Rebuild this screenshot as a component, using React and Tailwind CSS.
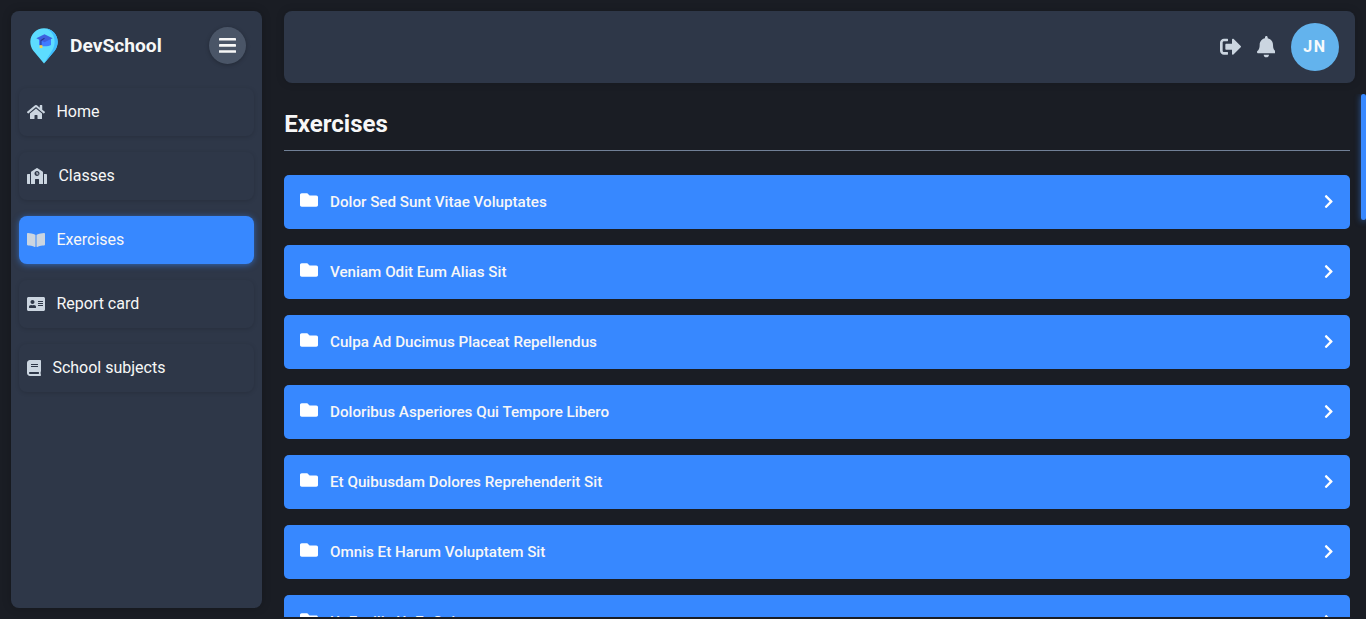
import React from "react";
import {
  FaHome, FaSchool, FaBookOpen, FaAddressCard, FaBook, FaSignOutAlt,
  FaBell, FaFolder, FaChevronRight,
} from "react-icons/fa";

const nav = [
  { label: "Home", Icon: FaHome, size: "w-[18px]" },
  { label: "Classes", Icon: FaSchool, size: "w-[20px]" },
  { label: "Exercises", Icon: FaBookOpen, size: "w-[18px]", active: true },
  { label: "Report card", Icon: FaAddressCard, size: "w-[18px]" },
  { label: "School subjects", Icon: FaBook, size: "w-[14px]" },
];

const folders = [
  "Dolor Sed Sunt Vitae Voluptates",
  "Veniam Odit Eum Alias Sit",
  "Culpa Ad Ducimus Placeat Repellendus",
  "Doloribus Asperiores Qui Tempore Libero",
  "Et Quibusdam Dolores Reprehenderit Sit",
  "Omnis Et Harum Voluptatem Sit",
  "Ut Facilis Ut Et Qui",
];

function Logo() {
  return (
    <svg viewBox="0 0 28 36" className="h-9 w-7 shrink-0">
      <path d="M14 .3C6.400.3.300 6.300.300 13.700c0 3.100 1 6 2.800 8.700L14 35.400l10.900-13c1.800-2.700 2.800-5.600 2.800-8.700C27.700 6.300 21.600.3 14 .3z" fill="#5ddcff" />
      <path d="M16 .5c5 1.700 8.600 7 8.600 13.200 0 3.100-.8 6-2.500 8.700L14 35.400l10.900-13c1.800-2.700 2.800-5.600 2.800-8.700C27.700 7 22.600 1.200 16 .5z" fill="#3fbcff" />
      <path d="M9 11v6c2.500 1.700 9.500 1.700 12 0V11z" fill="#3f7cff" />
      <path d="M14.500 6.300 22.600 10.300 14.500 14.300 6.300 10.300z" fill="#3d60e0" />
      <path d="M14.500 10.300 10.900 12.600v5" fill="none" stroke="#26358f" strokeWidth="1.100" />
      <path d="M9.600 17.200h2.800v2.900H9.600z" fill="#f4d14e" />
    </svg>
  );
}

function MenuIcon() {
  return (
    <svg viewBox="0 0 17 15" className="h-[15px] w-[17px]" fill="currentColor">
      <rect width="17" height="2.6" rx="0.4" />
      <rect y="6.100" width="17" height="2.600" rx="0.4" />
      <rect y="12.200" width="17" height="2.600" rx="0.4" />
    </svg>
  );
}

export default function App() {
  return (
    <div className="flex h-[619px] overflow-hidden bg-[#1a1d24] font-['Roboto',sans-serif] text-[#f7f7f7]">
      <aside className="my-[11px] ml-[11px] flex w-[251px] shrink-0 flex-col rounded-lg bg-[#2e3748] px-2 shadow-[0_0_10px_rgba(0,0,0,0.2)]">
        <div className="flex h-[69px] items-center pr-2 pl-[11px]">
          <Logo />
          <span className="ml-3 pt-px text-[19.2px] font-bold">DevSchool</span>
          <button className="ml-auto flex size-[37px] items-center justify-center rounded-full bg-[#4a5567] shadow-[0_1px_4px_rgba(0,0,0,0.25)]">
            <MenuIcon />
          </button>
        </div>
        <nav className="mt-2 flex flex-col gap-4">
          {nav.map(({ label, Icon, size, active }) => (
            <a
              key={label}
              className={
                "flex h-12 items-center gap-[11.4px] rounded-lg px-2 " +
                (active
                  ? "bg-[#3788ff] shadow-[0_1px_6px_rgba(55,136,255,0.6)]"
                  : "shadow-[0_1px_4px_rgba(0,0,0,0.15)]")
              }
            >
              <Icon className={"h-4 shrink-0 text-[#cbd5e0] " + size} />
              <span className="text-base">{label}</span>
            </a>
          ))}
        </nav>
      </aside>

      <main className="ml-[22px] flex min-w-0 flex-1 flex-col pt-[11px]">
        <header className="mr-[11px] flex h-[72px] shrink-0 items-center justify-end rounded-lg bg-[#2e3748] pr-4 text-[#cbd5e0] shadow-[0_0_8px_rgba(0,0,0,0.15)]">
          <FaSignOutAlt className="size-[21.33px]" />
          <FaBell className="ml-[15.3px] h-[21.33px] w-[18.66px]" />
          <span className="ml-[15.7px] flex size-12 items-center justify-center rounded-full bg-[#63b3ed] text-base font-bold tracking-[1.6px] text-[#f7fafc]">JN</span>
        </header>

        <div className="mt-[11px] mb-[2px] flex min-h-0 flex-1 overflow-hidden">
          <section className="min-w-0 flex-1">
            <h1 className="flex h-[57px] items-center border-b border-[#718096] pt-[3px] pl-[0.3px] text-2xl font-bold">Exercises</h1>
            <ul className="mt-6 flex flex-col gap-4">
              {folders.map((name) => (
                <li key={name} className="flex h-[54px] items-center rounded-[5px] bg-[#3788ff] px-4">
                  <FaFolder className="mb-[4px] size-[18px] text-white" />
                  <span className="ml-3 text-[15.2px] font-medium">{name}</span>
                  <FaChevronRight className="mr-[0.5px] mb-px ml-auto h-[15.2px] w-[9.5px] text-white" />
                </li>
              ))}
            </ul>
          </section>
          <div className="ml-[11px] h-[126px] w-[5px] rounded-sm bg-[#3788ff] shadow-[0_1px_6px_rgba(55,136,255,0.6)]" />
        </div>
      </main>
    </div>
  );
}
